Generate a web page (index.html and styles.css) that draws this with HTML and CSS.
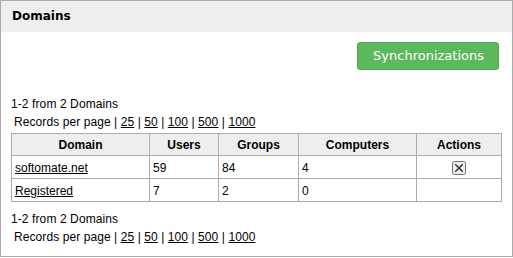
FILE: index.html
```html
<!DOCTYPE html>
<html lang="en">
<head>
<meta charset="utf-8">
<title>Domains</title>
<link rel="stylesheet" href="styles.css">
</head>
<body>
<div class="panel">
  <div class="panel-head">Domains</div>
  <div class="panel-body">
    <div class="toolbar">
      <button class="btn-sync" type="button">Synchronizations</button>
    </div>

    <div class="pager pager-top">
      <div class="pager-count">1-2 from 2 Domains</div>
      <div class="pager-size">Records per page | <a href="#">25</a> | <a href="#">50</a> | <a href="#">100</a> | <a href="#">500</a> | <a href="#">1000</a></div>
    </div>

    <table class="grid">
      <colgroup>
        <col class="c-domain">
        <col class="c-users">
        <col class="c-groups">
        <col class="c-computers">
        <col class="c-actions">
      </colgroup>
      <thead>
        <tr>
          <th>Domain</th>
          <th>Users</th>
          <th>Groups</th>
          <th>Computers</th>
          <th>Actions</th>
        </tr>
      </thead>
      <tbody>
        <tr>
          <td><a href="#">softomate.net</a></td>
          <td>59</td>
          <td>84</td>
          <td>4</td>
          <td class="act">
            <span class="del-btn" title="Delete">
              <svg width="14" height="14" viewBox="0 0 14 14" aria-hidden="true">
                <rect x="0.5" y="0.5" width="13" height="13" rx="2" fill="#f0f0f0" stroke="#707070"/>
                <path d="M3.2 3.2 L10.8 10.8 M10.8 3.2 L3.2 10.8" stroke="#3a3a3a" stroke-width="1.6" fill="none"/>
              </svg>
            </span>
          </td>
        </tr>
        <tr>
          <td><a href="#">Registered</a></td>
          <td>7</td>
          <td>2</td>
          <td>0</td>
          <td class="act"></td>
        </tr>
      </tbody>
    </table>

    <div class="pager pager-bottom">
      <div class="pager-count">1-2 from 2 Domains</div>
      <div class="pager-size">Records per page | <a href="#">25</a> | <a href="#">50</a> | <a href="#">100</a> | <a href="#">500</a> | <a href="#">1000</a></div>
    </div>
  </div>
</div>
</body>
</html>
```

FILE: styles.css
```css
html, body {
  margin: 0;
  padding: 0;
  background: #fff;
}

.panel {
  box-sizing: border-box;
  width: 513px;
  height: 257px;
  border: 1px solid #ababab;
  background: #fff;
}

.panel-head {
  height: 31px;
  line-height: 31px;
  padding-left: 11px;
  background: #eeeeee;
  font-family: "DejaVu Sans", Verdana, sans-serif;
  font-size: 12px;
  font-weight: bold;
  color: #000;
}

.panel-body {
  padding: 10px 10px 0 10px;
  font-family: "Liberation Sans", Arial, sans-serif;
  font-size: 12px;
  color: #000;
}

.toolbar {
  display: flex;
  justify-content: flex-end;
  padding-right: 3px;
}

.btn-sync {
  height: 28px;
  padding: 0 14px 0 15px;
  border: 1px solid #4cae4c;
  border-radius: 3px;
  background: #5cb85c;
  color: #fff;
  font-family: "DejaVu Sans", Verdana, sans-serif;
  font-size: 13px;
  line-height: 26px;
  cursor: pointer;
}

.pager {
  line-height: 15px;
}

.pager-top {
  margin-top: 27px;
}

.pager-bottom {
  margin-top: 10px;
}

.pager-count {
  letter-spacing: 0.1px;
}

.pager-size {
  margin-top: 3px;
  padding-left: 3px;
  letter-spacing: 0.08px;
}

.pager a,
.grid a {
  color: #000;
  text-decoration: underline;
}

.grid {
  width: 490px;
  margin-top: 3px;
  border-collapse: collapse;
  table-layout: fixed;
}

.c-domain { width: 138px; }
.c-users { width: 69px; }
.c-groups { width: 80px; }
.c-computers { width: 118px; }
.c-actions { width: 85px; }

.grid th,
.grid td {
  border: 1px solid #ababab;
  height: 21px;
  padding: 0 3px;
  text-align: left;
  vertical-align: middle;
}

.grid th {
  background: #eeeeee;
  font-weight: bold;
  text-align: center;
}

.grid td {
  padding-top: 1px;
}

.grid td.act {
  text-align: center;
}

.del-btn {
  display: inline-block;
  width: 14px;
  height: 14px;
  vertical-align: middle;
  cursor: pointer;
}

.del-btn svg {
  display: block;
}
```
